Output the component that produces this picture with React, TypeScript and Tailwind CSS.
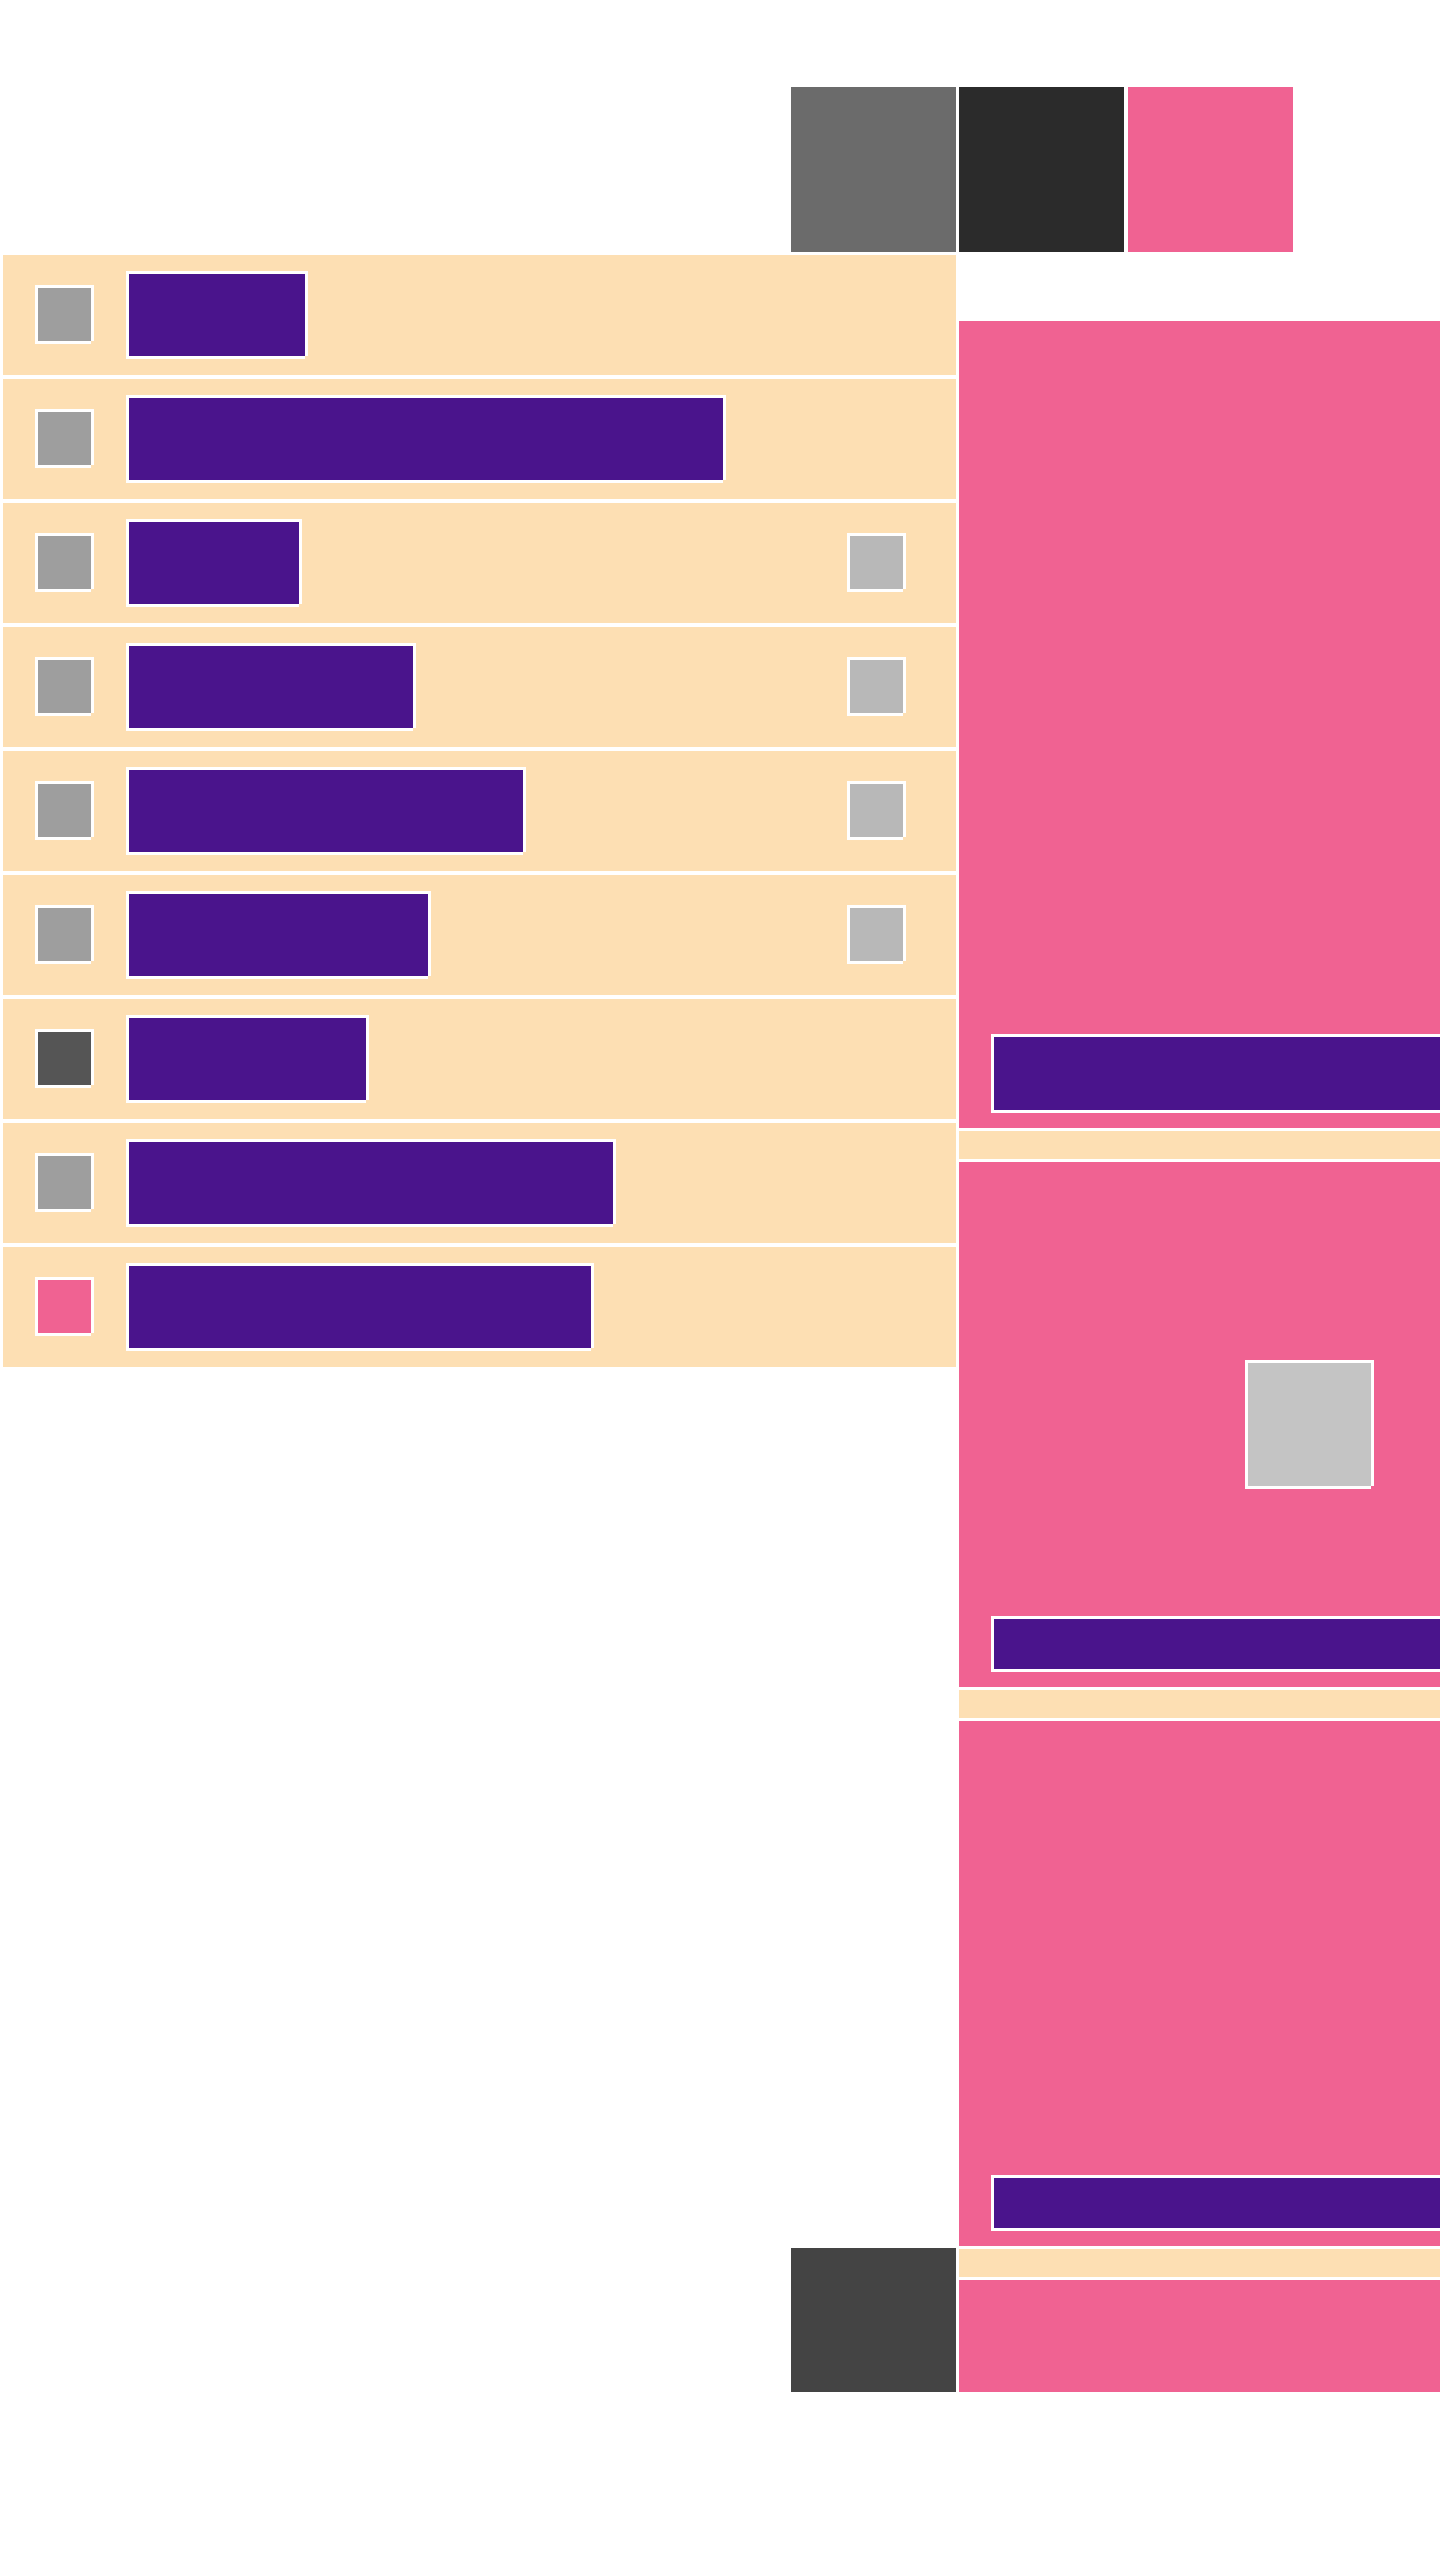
import React from "react";

type Row = {
  barClass: string;
  leadClass: string;
  hasTail?: boolean;
};

const rows: Row[] = [
  { barClass: "w-[179px]", leadClass: "bg-[#9e9e9e]" },
  { barClass: "w-[597px]", leadClass: "bg-[#9e9e9e]" },
  { barClass: "w-[173px]", leadClass: "bg-[#9e9e9e]", hasTail: true },
  { barClass: "w-[287px]", leadClass: "bg-[#9e9e9e]", hasTail: true },
  { barClass: "w-[397px]", leadClass: "bg-[#9e9e9e]", hasTail: true },
  { barClass: "w-[302px]", leadClass: "bg-[#9e9e9e]", hasTail: true },
  { barClass: "w-[240px]", leadClass: "bg-[#555555]" },
  { barClass: "w-[487px]", leadClass: "bg-[#9e9e9e]" },
  { barClass: "w-[465px]", leadClass: "bg-[#f06292]" },
];

// white frame that leaves the bottom-right corner open, as in the mockup
const frame =
  "border-t-[3px] border-l-[3px] border-white shadow-[3px_0_0_0_#ffffff,0_3px_0_0_#ffffff]";

const ListRow: React.FC<{ row: Row }> = ({ row }) => (
  <div className="flex h-[120px] items-start bg-[#fddfb3] pl-[32px] pr-[53px]">
    <div className={`mt-[30px] h-[56px] w-[56px] shrink-0 ${frame} ${row.leadClass}`} />
    <div className={`ml-[35px] mt-[16px] h-[85px] shrink-0 bg-[#4a148c] ${frame} ${row.barClass}`} />
    {row.hasTail && (
      <div className={`ml-auto mt-[30px] h-[56px] w-[56px] shrink-0 bg-[#b8b8b8] ${frame}`} />
    )}
  </div>
);

const Strip = () => <div className="h-[28px] shrink-0 bg-[#fddfb3]" />;

export default function App() {
  return (
    <div className="min-h-[2560px] w-[1440px] overflow-hidden bg-white pl-[3px] pt-[87px]">
      {/* top swatches */}
      <div className="flex gap-[3px] pl-[788px]">
        <div className="h-[165px] w-[165px] bg-[#6b6b6b]" />
        <div className="h-[165px] w-[165px] bg-[#2b2b2b]" />
        <div className="ml-[1px] h-[165px] w-[165px] bg-[#f06292]" />
      </div>

      <div className="mt-[3px] flex items-stretch gap-[3px]">
        {/* list column */}
        <div className="flex w-[953px] shrink-0 flex-col gap-[4px]">
          {rows.map((row, i) => (
            <ListRow key={i} row={row} />
          ))}
          <div className="mt-auto h-[144px] w-[165px] self-end bg-[#444444]" />
        </div>

        {/* side column */}
        <div className="flex w-[640px] shrink-0 flex-col gap-[3px] pt-[66px]">
          <div className="flex h-[807px] flex-col justify-end bg-[#f06292] pb-[18px] pl-[32px]">
            <div className={`h-[76px] w-full bg-[#4a148c] ${frame}`} />
          </div>
          <Strip />
          <div className="flex h-[525px] flex-col bg-[#f06292] pb-[18px] pl-[32px]">
            <div className={`ml-[254px] mt-[198px] h-[126px] w-[126px] bg-[#c4c4c4] ${frame}`} />
            <div className={`mt-auto h-[53px] w-full bg-[#4a148c] ${frame}`} />
          </div>
          <Strip />
          <div className="flex h-[525px] flex-col justify-end bg-[#f06292] pb-[18px] pl-[32px]">
            <div className={`h-[53px] w-full bg-[#4a148c] ${frame}`} />
          </div>
          <Strip />
          <div className="h-[112px] bg-[#f06292]" />
        </div>
      </div>
    </div>
  );
}
